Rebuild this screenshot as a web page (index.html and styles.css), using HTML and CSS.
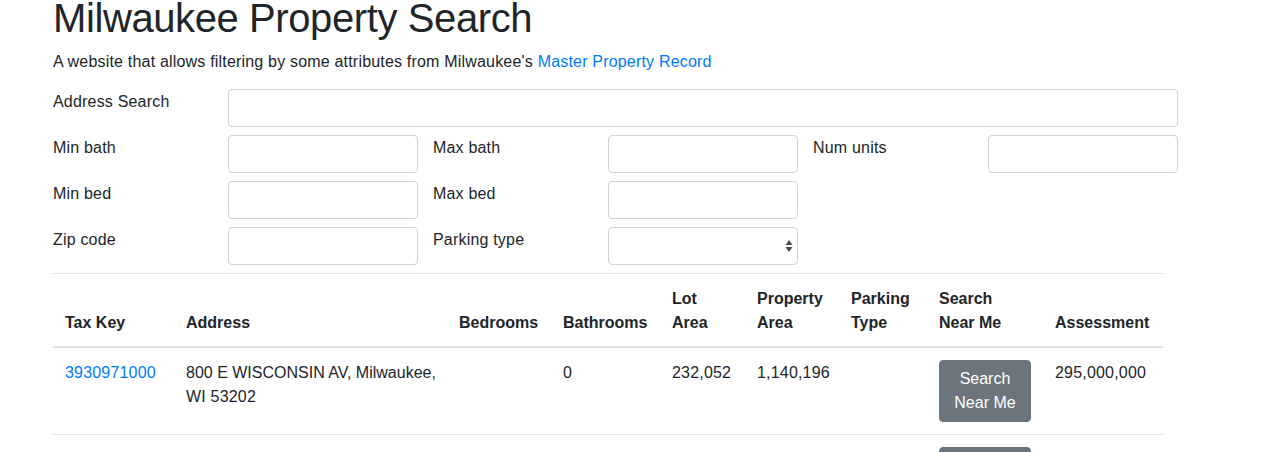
FILE: index.html
```html
<!DOCTYPE html>
<html>
<head>
<meta charset="utf-8">
<title>Milwaukee Property Search</title>
<link rel="stylesheet" href="styles.css">
</head>
<body>
<div class="page">
  <div class="inner">
    <h1 class="title">Milwaukee Property Search</h1>
    <p class="lead">A website that allows filtering by some attributes from Milwaukee's <a href="#" class="link">Master Property Record</a></p>
  </div>
  <form class="filters">
    <label class="lbl">Address Search</label>
    <input class="field span5" type="text">

    <label class="lbl">Min bath</label>
    <input class="field" type="text">
    <label class="lbl">Max bath</label>
    <input class="field" type="text">
    <label class="lbl">Num units</label>
    <input class="field" type="text">

    <label class="lbl">Min bed</label>
    <input class="field" type="text">
    <label class="lbl">Max bed</label>
    <input class="field" type="text">
    <span class="blank"></span>
    <span class="blank"></span>

    <label class="lbl">Zip code</label>
    <input class="field" type="text">
    <label class="lbl">Parking type</label>
    <div class="select-wrap">
      <select class="field sel"><option></option></select>
      <svg class="sel-arrows" width="8" height="14" viewBox="0 0 8 14"><path d="M4 1 L7.5 6 L0.5 6 Z" fill="#4a4a4a"/><path d="M4 13 L7.5 8 L0.5 8 Z" fill="#4a4a4a"/></svg>
    </div>
  </form>
  <div class="inner">
    <table class="results">
      <colgroup>
        <col class="w-tax"><col class="w-addr"><col class="w-bed"><col class="w-bath"><col class="w-lot"><col class="w-prop"><col class="w-park"><col class="w-near"><col class="w-assess">
      </colgroup>
      <thead>
        <tr>
          <th>Tax Key</th>
          <th>Address</th>
          <th>Bedrooms</th>
          <th>Bathrooms</th>
          <th>Lot Area</th>
          <th>Property Area</th>
          <th>Parking Type</th>
          <th>Search Near Me</th>
          <th>Assessment</th>
        </tr>
      </thead>
      <tbody>
        <tr>
          <td><a href="#" class="link">3930971000</a></td>
          <td><span class="addr-line">800 E WISCONSIN AV, Milwaukee,</span> WI 53202</td>
          <td></td>
          <td>0</td>
          <td>232,052</td>
          <td>1,140,196</td>
          <td></td>
          <td class="btn-cell"><button class="btn" type="button">Search Near Me</button></td>
          <td>295,000,000</td>
        </tr>
        <tr>
          <td></td>
          <td></td>
          <td></td>
          <td></td>
          <td></td>
          <td></td>
          <td></td>
          <td class="btn-cell"><button class="btn" type="button">Search Near Me</button></td>
          <td></td>
        </tr>
      </tbody>
    </table>
  </div>
</div>
</body>
</html>
```

FILE: styles.css
```css
html, body {
  margin: 0;
  padding: 0;
  background: #fff;
}
body {
  font-family: "Liberation Sans", Arial, sans-serif;
  font-size: 16px;
  line-height: 1.5;
  color: #212529;
  letter-spacing: 0.19px;
}
.page {
  margin-left: 38px;
  width: 1140px;
}
.inner {
  padding: 0 15px;
}
.title {
  font-size: 40px;
  font-weight: 500;
  line-height: 48px;
  letter-spacing: -0.4px;
  margin: -6px 0 8px 0;
}
.lead {
  margin: 0 0 15px 0;
}
.link {
  color: #007bff;
  text-decoration: none;
}
.filters {
  display: grid;
  grid-template-columns: repeat(6, 190px);
  row-gap: 8px;
  margin: 0;
}
.lbl {
  padding: 1px 0 0 15px;
  line-height: 24px;
}
.field {
  box-sizing: border-box;
  height: 38px;
  width: 100%;
  border: 1px solid #ced4da;
  border-radius: 4px;
  background: #fff;
  font: inherit;
  padding: 6px 12px;
  margin: 0;
}
.span5 {
  grid-column: span 5;
}
.select-wrap {
  position: relative;
}
.sel {
  appearance: none;
  -webkit-appearance: none;
}
.sel-arrows {
  position: absolute;
  right: 5px;
  top: 12px;
}
.results {
  width: 1110px;
  table-layout: fixed;
  border-collapse: collapse;
  margin-top: 8px;
}
.w-tax { width: 121px; }
.w-addr { width: 273px; }
.w-bed { width: 104px; }
.w-bath { width: 109px; }
.w-lot { width: 85px; }
.w-prop { width: 94px; }
.w-park { width: 88px; }
.w-near { width: 116px; }
.w-assess { width: 120px; }
.results th,
.results td {
  padding: 13px 12px 11px 12px;
  text-align: left;
  vertical-align: top;
  border-top: 1px solid #dee2e6;
}
.results td.btn-cell {
  padding: 12px;
}
.results th {
  vertical-align: bottom;
  font-weight: bold;
  letter-spacing: 0;
  border-bottom: 2px solid #dee2e6;
}
.addr-line {
  white-space: nowrap;
  letter-spacing: 0;
}
.btn {
  display: block;
  width: 100%;
  box-sizing: border-box;
  background: #6c757d;
  border: 1px solid #6c757d;
  border-radius: 4px;
  color: #fff;
  font: inherit;
  line-height: 24px;
  padding: 6px 12px;
  text-align: center;
}
```
